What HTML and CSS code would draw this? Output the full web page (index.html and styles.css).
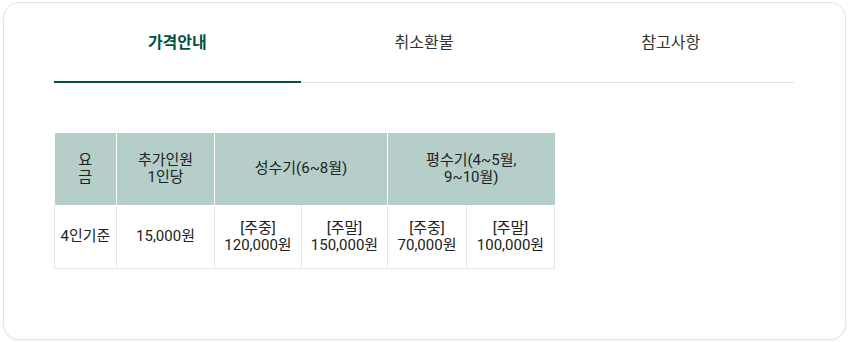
FILE: index.html
```html
<!DOCTYPE html>
<html lang="ko">
<head>
<meta charset="utf-8">
<link rel="stylesheet" href="styles.css">
</head>
<body>
<div class="card">
  <div class="tabs">
    <div class="tab active">가격안내</div>
    <div class="tab">취소환불</div>
    <div class="tab">참고사항</div>
  </div>
  <table class="price">
    <colgroup>
      <col class="c1"><col class="c2"><col class="c3"><col class="c4"><col class="c5"><col class="c6">
    </colgroup>
    <thead>
      <tr>
        <th>요<br>금</th>
        <th>추가인원<br>1인당</th>
        <th colspan="2">성수기(6~8월)</th>
        <th colspan="2">평수기(4~5월,<br>9~10월)</th>
      </tr>
    </thead>
    <tbody>
      <tr>
        <td>4인기준</td>
        <td>15,000원</td>
        <td>[주중]<br>120,000원</td>
        <td>[주말]<br>150,000원</td>
        <td>[주중]<br>70,000원</td>
        <td>[주말]<br>100,000원</td>
      </tr>
    </tbody>
  </table>
</div>
</body>
</html>
```
FILE: styles.css
```css
* { box-sizing: border-box; }
html, body { margin: 0; padding: 0; background: #ffffff; }
body {
  font-family: Roboto, "Noto Sans CJK KR", sans-serif;
  color: #222;
  padding: 2px 3px 2px 3px;
}
.card {
  width: 843px;
  height: 338px;
  border: 1px solid #e3e3e3;
  border-radius: 16px;
  background: #fff;
  box-shadow: 0 1px 2px rgba(0,0,0,0.06);
  padding: 0 50px;
}
.tabs {
  display: flex;
  width: 740px;
  border-bottom: 1px solid #e2e2e2;
}
.tab {
  flex: 1;
  text-align: center;
  font-size: 16px;
  color: #333;
  height: 79px;
  line-height: 20px;
  padding-top: 30px;
  position: relative;
}
.tab.active {
  color: #00533f;
  font-weight: 700;
}
.tab.active::after {
  content: "";
  position: absolute;
  left: 0; right: 0; bottom: -1px;
  height: 2px;
  background: #00533f;
}
.price {
  margin-top: 50px;
  border-collapse: collapse;
  table-layout: fixed;
  width: 500px;
  font-size: 15px;
  line-height: 17px;
  text-align: center;
}
.c1 { width: 62px; }
.c2 { width: 98px; }
.c3 { width: 87px; }
.c4 { width: 86px; }
.c5 { width: 79px; }
.c6 { width: 88px; }
.price th {
  background: #b5cec9;
  font-weight: 400;
  height: 72px;
  border: 1px solid #fff;
  border-top: 0;
  padding: 0;
  color: #222;
}
.price th:first-child { border-left: 0; }
.price th:last-child { border-right: 0; }
.price td {
  height: 63px;
  border: 1px solid #e6e6e6;
  padding: 0;
  color: #222;
}
```
